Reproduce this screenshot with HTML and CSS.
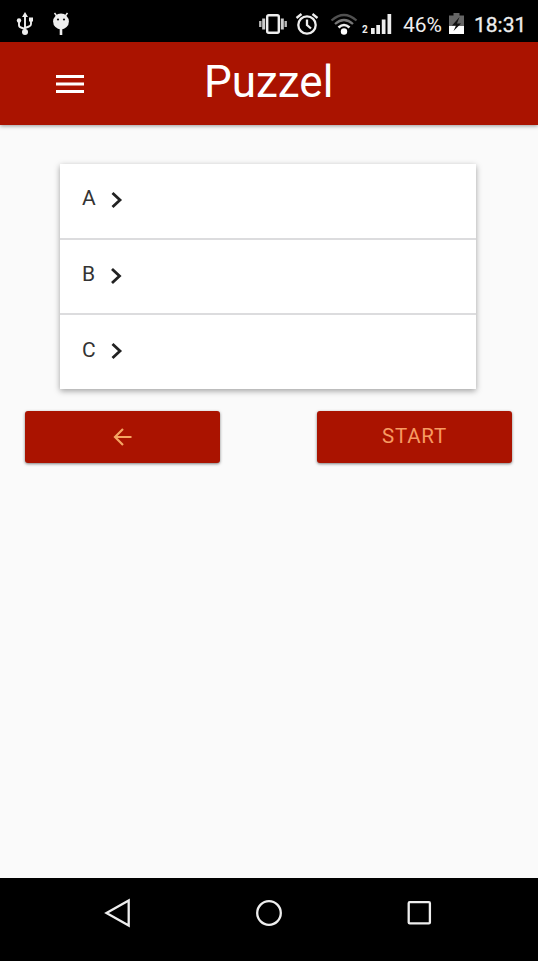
FILE: index.html
```html
<!DOCTYPE html>
<html lang="nl">
<head>
<meta charset="utf-8">
<title>Puzzel</title>
<link rel="stylesheet" href="styles.css">
</head>
<body>
<div class="status">
  <svg class="usb" width="18" height="24" viewBox="0 0 18 24" fill="none" stroke="#eee" stroke-width="1.900"><path d="M9 3v17M3 10v3q0 2 2 2.500l4 1.500M15 8v4q0 2-2 2.500l-4 1.500"/><g fill="#eee" stroke="none"><circle cx="9" cy="20" r="3"/><path d="M9 0l3 5H6z"/><circle cx="3" cy="8.500" r="2.200"/><path d="M13 5.500h4v4h-4z"/></g></svg>
  <svg class="droid" width="18" height="24" viewBox="0 0 18 24"><g fill="#eee"><circle cx="9" cy="9.500" r="7.900"/><path d="M2.500 1l3 4M15.500 1l-3 4" stroke="#eee" stroke-width="1.500"/><path d="M7.700 17h2.600v6H7.700z"/></g><circle cx="6" cy="7.500" r="1.100" fill="#111"/><circle cx="12" cy="7.500" r="1.100" fill="#111"/></svg>
  <svg class="vibrate" width="28" height="24" viewBox="0 0 28 24"><rect x="8.200" y="3.200" width="11.600" height="17.600" rx="1.500" fill="none" stroke="#eee" stroke-width="2.400"/><path d="M4.700 6.500v11M23.300 6.500v11" stroke="#ccc" stroke-width="3"/><path d="M1.300 9v6M26.700 9v6" stroke="#bbb" stroke-width="2.400"/></svg>
  <svg class="alarm" width="24" height="24" viewBox="0 0 24 24" fill="none" stroke="#eee" stroke-width="2.300"><circle cx="12" cy="13" r="8.700"/><path d="M12 7.500V13l4 3.500M1.500 6l5-4M22.500 6l-5-4"/></svg>
  <svg class="wifi" width="28" height="24" viewBox="0 0 28 24" fill="none" stroke-width="2.300"><path d="M1.500 8.500q12.500-11 25 0" stroke="#505050"/><path d="M5 12q9-8 18 0" stroke="#777"/><path d="M8.500 15.500q5.500-5 11 0" stroke="#eee" stroke-width="2.600"/><circle cx="14" cy="19.500" r="3.200" fill="#fff"/></svg>
  <span class="sim">2</span>
  <svg class="signal" width="21" height="24" viewBox="0 0 21 24" fill="#eee"><path d="M0 16h3.700v6H0zM5.300 13H9v9H5.300zM10.800 7.500h3.700V22h-3.700zM16.500 2h3.700v20h-3.700z"/></svg>
  <span class="percent">46%</span>
  <svg class="battery" width="15" height="24" viewBox="0 0 15 24"><path d="M4.500 1h6v2.500H15V22H0V3.500h4.500z" fill="#666"/><path d="M0 14h15v8H0z" fill="#fff"/><path d="M10.500 5L3 13.500h4L4.500 19 12 11.500H8z" fill="#111"/></svg>
  <span class="clock">18:31</span>
</div>
<header class="bar">
  <svg class="menu" width="28" height="20" viewBox="0 0 28 20"><path d="M0 2.500h28M0 10h28M0 17.500h28" stroke="#fff" stroke-width="3"/></svg>
  <h1 class="title">Puzzel</h1>
</header>
<main class="content">
  <ul class="list">
    <li class="row"><span class="label">A</span><svg width="13" height="18" viewBox="0 0 13 18"><path d="M2.500 2l7.500 7-7.500 7" class="chevron"/></svg></li>
    <li class="row"><span class="label">B</span><svg width="13" height="18" viewBox="0 0 13 18"><path d="M2 2l7.500 7L2 16" class="chevron"/></svg></li>
    <li class="row"><span class="label">C</span><svg width="13" height="18" viewBox="0 0 13 18"><path d="M2.500 2l7.500 7-7.500 7" class="chevron"/></svg></li>
  </ul>
  <div class="actions">
    <button class="button" aria-label="Terug"><svg width="20" height="20" viewBox="0 0 20 20"><path d="M18.500 10H2.500M10 2l-8 8 8 8" fill="none" stroke="#f5a562" stroke-width="2.200"/></svg></button>
    <button class="button start">START</button>
  </div>
</main>
<nav class="nav">
  <svg class="back" width="28" height="30" viewBox="0 0 28 30"><path d="M24.700 2.500v25L2.500 15z"/></svg>
  <svg class="home" width="28" height="30" viewBox="0 0 28 30"><circle cx="14" cy="15" r="11.800"/></svg>
  <svg class="recent" width="28" height="30" viewBox="0 0 28 30"><rect x="3.700" y="4.200" width="21.200" height="21.200" rx="1"/></svg>
</nav>
</body>
</html>
```
FILE: styles.css
```css
* {
  box-sizing: border-box;
}

body {
  margin: 0;
  height: 961px;
  display: flex;
  flex-direction: column;
  overflow: hidden;
  background: #fafafa;
  font-family: Roboto, "Liberation Sans", sans-serif;
}

svg {
  display: block;
  flex: none;
}

.status {
  height: 42px;
  padding: 12px 0 0 16px;
  display: flex;
  flex: none;
  background: #000;
  color: #eee;
  font-size: 21px;
  line-height: 26px;
  white-space: nowrap;
}

.droid { margin-left: 18px; }
.vibrate { margin-left: 189px; }
.alarm { margin-left: 8px; }
.wifi { margin-left: 11px; }

.sim {
  width: 9px;
  margin-left: 4px;
  padding-top: 12px;
  font-size: 10px;
  line-height: 12px;
  font-weight: 700;
}

.percent {
  width: 46px;
  margin-left: 11px;
}

.clock {
  margin-left: 10px;
  font-size: 21px;
  -webkit-text-stroke: .3px #eee;
}

.bar {
  height: 83px;
  display: flex;
  flex: none;
  align-items: center;
  padding-left: 56px;
  background: #aa1300;
  box-shadow: 0 1px 4px rgba(0, 0, 0, .4);
}

.title {
  margin: -3px 0 0 120px;
  color: #fff;
  font-size: 44px;
  font-weight: 400;
  line-height: 52px;
}

.content {
  flex: 1;
  padding: 39px 26px 0 25px;
}

.list {
  width: 416px;
  height: 225px;
  margin: 0 0 0 35px;
  padding: 0;
  display: flex;
  flex-direction: column;
  list-style: none;
  background: #fff;
  box-shadow: 0 2px 6px rgba(0, 0, 0, .36);
}

.row {
  flex: 1;
  display: flex;
  align-items: center;
  padding: 0 0 2px 22px;
  color: #333;
  font-size: 21px;
}

.row + .row {
  border-top: 2px solid #dcdcde;
}

.label {
  width: 28px;
  margin-top: -3px;
}

.chevron {
  fill: none;
  stroke: #222;
  stroke-width: 2.8;
}

.actions {
  display: flex;
  justify-content: space-between;
  margin-top: 22px;
}

.button {
  width: 195px;
  height: 52px;
  display: flex;
  align-items: center;
  justify-content: center;
  padding: 0;
  border: 0;
  border-radius: 3px;
  background: #aa1300;
  box-shadow: 0 1px 3px rgba(0, 0, 0, .5);
  color: #f79b62;
  font: 400 20.5px Roboto, sans-serif;
  letter-spacing: .8px;
}

.start {
  padding-bottom: 2px;
}

.nav {
  height: 83px;
  display: flex;
  flex: none;
  justify-content: space-between;
  padding: 20px 105px 0 104px;
  background: #000;
}

.nav svg {
  fill: none;
  stroke: #eee;
  stroke-width: 2.3;
}
```
